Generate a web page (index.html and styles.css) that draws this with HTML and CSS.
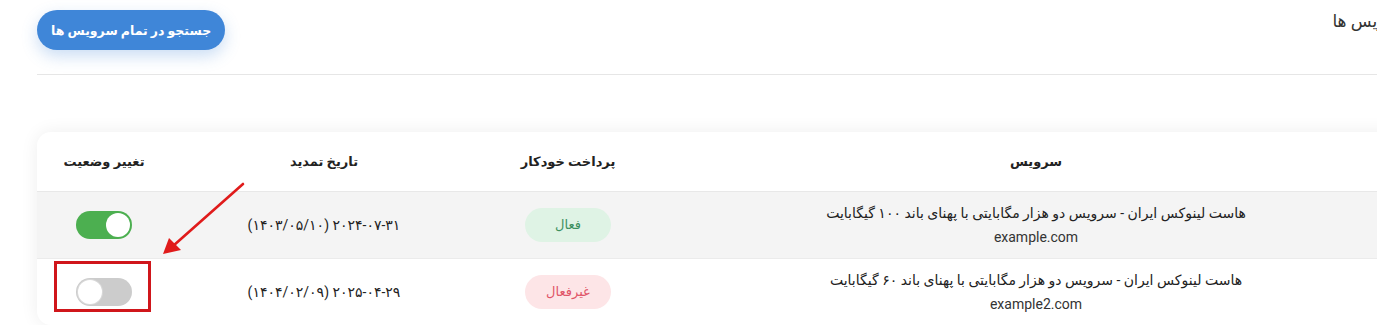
FILE: index.html
```html
<!DOCTYPE html>
<html lang="fa">
<head>
<meta charset="utf-8">
<title>سرویس ها</title>
<link rel="stylesheet" href="styles.css">
</head>
<body>
<div class="page">
  <div class="topbar">
    <h1 class="title">سرویس ها</h1>
    <button class="search-btn" type="button">جستجو در تمام سرویس ها</button>
  </div>
  <hr class="divider">
  <div class="card">
    <table class="services">
      <colgroup>
        <col class="col-service">
        <col class="col-pay">
        <col class="col-date">
        <col class="col-toggle">
      </colgroup>
      <thead>
        <tr>
          <th>سرویس</th>
          <th>پرداخت خودکار</th>
          <th>تاریخ تمدید</th>
          <th>تغییر وضعیت</th>
        </tr>
      </thead>
      <tbody>
        <tr class="row-alt">
          <td class="service">
            <div class="service-name">هاست لینوکس ایران - سرویس دو هزار مگابایتی با پهنای باند ۱۰۰ گیگابایت</div>
            <div class="service-domain">example.com</div>
          </td>
          <td><span class="badge badge-on">فعال</span></td>
          <td class="date">۲۰۲۴-۰۷-۳۱ (۱۴۰۳/۰۵/۱۰)</td>
          <td><span class="switch switch-on"><span class="knob"></span></span></td>
        </tr>
        <tr>
          <td class="service">
            <div class="service-name">هاست لینوکس ایران - سرویس دو هزار مگابایتی با پهنای باند ۶۰ گیگابایت</div>
            <div class="service-domain">example2.com</div>
          </td>
          <td><span class="badge badge-off">غیرفعال</span></td>
          <td class="date">۲۰۲۵-۰۴-۲۹ (۱۴۰۴/۰۲/۰۹)</td>
          <td><span class="switch switch-off"><span class="knob"></span></span></td>
        </tr>
      </tbody>
    </table>
  </div>
  <div class="mark-box"></div>
  <svg class="mark-arrow" width="100" height="80" viewBox="0 0 100 80" aria-hidden="true">
    <line x1="88" y1="4" x2="18" y2="66" stroke="#e01b1b" stroke-width="2.6" stroke-linecap="round"/>
    <polygon points="8,74 14,58 26,70" fill="#e01b1b"/>
  </svg>
</div>
</body>
</html>
```

FILE: styles.css
```css
html, body {
  margin: 0;
  padding: 0;
  background: #ffffff;
}
body {
  overflow: hidden;
  font-family: Roboto, "DejaVu Sans", sans-serif;
  color: #222;
}
.page {
  position: relative;
  width: 1376px;
  padding: 10px 37px 0 37px;
}
.topbar {
  direction: rtl;
  display: flex;
  justify-content: space-between;
  align-items: flex-start;
}
.title {
  margin: 0 4px 0 0;
  font-size: 17px;
  line-height: 22px;
  font-weight: normal;
  color: #333;
}
.search-btn {
  height: 40px;
  padding: 0 14px;
  border: none;
  border-radius: 20px;
  background: #3f86d8;
  color: #fff;
  font-family: inherit;
  font-size: 12.5px;
  font-weight: 600;
  box-shadow: 0 6px 16px rgba(63, 134, 216, 0.28);
}
.divider {
  margin: 24px 0 0 0;
  border: none;
  border-top: 1px solid #e6e6e6;
  height: 0;
}
.card {
  margin-top: 57px;
  background: #fff;
  border-radius: 14px;
  box-shadow: 0 0 18px rgba(0, 0, 0, 0.07);
  overflow: hidden;
}
.services {
  direction: rtl;
  width: 100%;
  table-layout: fixed;
  border-collapse: collapse;
}
.col-service { width: 754px; }
.col-pay { width: 182px; }
.col-date { width: 306px; }
.col-toggle { width: 134px; }
.services th {
  height: 57px;
  font-size: 13px;
  font-weight: 600;
  color: #222;
  text-align: center;
  border-bottom: 1px solid #e8e8e8;
}
.services td {
  height: 66px;
  text-align: center;
  vertical-align: middle;
  font-size: 14px;
  color: #222;
  padding: 0;
}
.row-alt td {
  background: #f4f4f4;
  border-bottom: 1px solid #ebebeb;
}
.service-name {
  line-height: 24px;
}
.service-domain {
  line-height: 24px;
  font-size: 14px;
  color: #333;
}
.date {
  font-size: 14px;
}
.badge {
  display: inline-block;
  width: 86px;
  height: 34px;
  line-height: 34px;
  border-radius: 17px;
  font-size: 13px;
}
.badge-on {
  background: #dff3e5;
  color: #3d8f5f;
}
.badge-off {
  background: #fde5e7;
  color: #e05468;
}
.switch {
  direction: ltr;
  display: inline-flex;
  align-items: center;
  box-sizing: border-box;
  width: 56px;
  height: 28px;
  padding: 0 2px;
  border-radius: 14px;
  vertical-align: middle;
}
.switch-on {
  background: #4caf50;
  justify-content: flex-end;
}
.switch-off {
  background: #cccccc;
  justify-content: flex-start;
}
.knob {
  width: 24px;
  height: 24px;
  border-radius: 50%;
  background: #fff;
}
.switch-off .knob {
  box-shadow: 0 0 0 1px #d9d9d9;
}
.mark-box {
  position: absolute;
  left: 54px;
  top: 261px;
  width: 91px;
  height: 45px;
  border: 3px solid #d0161b;
}
.mark-arrow {
  position: absolute;
  left: 155px;
  top: 180px;
}
```
